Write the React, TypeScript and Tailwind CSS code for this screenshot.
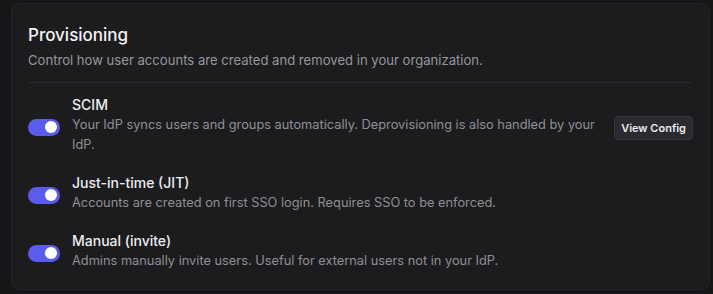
import React, { useState } from 'react';

interface RowProps {
  title: string;
  description: string;
  enabled: boolean;
  onToggle: () => void;
  action?: React.ReactNode;
}

const Toggle: React.FC<{ on: boolean; onClick: () => void }> = ({ on, onClick }) => (
  <button
    type="button"
    role="switch"
    aria-checked={on}
    onClick={onClick}
    className={`relative shrink-0 mt-[4px] w-8 h-[17px] rounded-full transition-colors ${on ? 'bg-[#5b5bf0]' : 'bg-[#3a3a3f]'}`}
  >
    <span
      className={`absolute top-[2.5px] w-3 h-3 rounded-full bg-white transition-all ${on ? 'left-[17px]' : 'left-[3px]'}`}
    />
  </button>
);

const ProvisionRow: React.FC<RowProps> = ({ title, description, enabled, onToggle, action }) => (
  <div className="flex items-center gap-3">
    <Toggle on={enabled} onClick={onToggle} />
    <div className="flex-1 min-w-0">
      <div className="text-[14px] leading-[20px] font-medium text-[#ededef]">{title}</div>
      <div className="text-[12.8px] leading-[20px] text-[#8f8f96]">{description}</div>
    </div>
    {action}
  </div>
);

export default function App() {
  const [modes, setModes] = useState({ scim: true, jit: true, manual: true });
  const flip = (k: keyof typeof modes) => setModes((m) => ({ ...m, [k]: !m[k] }));

  return (
    <div
      className="min-h-screen bg-[#161618] pt-[3px] pl-[11px] pr-[3px] pb-[3px]"
      style={{ fontFamily: 'Inter, "Noto Sans", sans-serif' }}
    >
      <div className="bg-[#1c1c1f] border border-[#26262a] rounded-lg px-4 pt-[17px] pb-[18px]">
        <h2 className="text-[17px] leading-[28px] font-medium text-[#f2f2f4]">Provisioning</h2>
        <p className="mt-[1px] text-[13.1px] leading-[20px] text-[#96969d]">
          Control how user accounts are created and removed in your organization.
        </p>
        <div className="mt-[12px] h-px bg-[#2c2c30] mr-[1px]" />

        <div className="mt-[12px] flex flex-col gap-[18px]">
          <ProvisionRow
            title="SCIM"
            description="Your IdP syncs users and groups automatically. Deprovisioning is also handled by your IdP."
            enabled={modes.scim}
            onToggle={() => flip('scim')}
            action={
              <button
                type="button"
                className="shrink-0 self-center mt-[6px] ml-[3px] h-6 px-[6px] rounded-[4px] bg-[#2b2b2f] border border-[#37373c] text-[11px] font-semibold text-[#ececef]"
              >
                View Config
              </button>
            }
          />
          <ProvisionRow
            title="Just-in-time (JIT)"
            description="Accounts are created on first SSO login. Requires SSO to be enforced."
            enabled={modes.jit}
            onToggle={() => flip('jit')}
          />
          <ProvisionRow
            title="Manual (invite)"
            description="Admins manually invite users. Useful for external users not in your IdP."
            enabled={modes.manual}
            onToggle={() => flip('manual')}
          />
        </div>
      </div>
    </div>
  );
}
